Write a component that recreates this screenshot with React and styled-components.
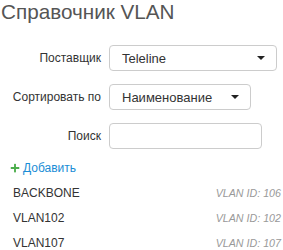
import React from "react";
import styled, { createGlobalStyle } from "styled-components";
import { FaPlus } from "react-icons/fa";

const GlobalStyle = createGlobalStyle`
    body {
        margin: 0;
        background: #fff;
        font-family: "Liberation Sans", Arial, sans-serif;
        color: #333;
    }
`;

const vlans = [
    { name: "BACKBONE", id: 106 },
    { name: "VLAN102", id: 102 },
    { name: "VLAN107", id: 107 },
];

const App = () => {
    return (
        <Wrapper>
            <GlobalStyle />
            <Title>Справочник VLAN</Title>

            <FormGrid>
                <Label>Поставщик</Label>
                <Select width="168px">
                    <span>Teleline</span>
                    <Caret />
                </Select>

                <Label>Сортировать по</Label>
                <Select width="142px">
                    <span>Наименование</span>
                    <Caret />
                </Select>

                <Label>Поиск</Label>
                <Input type="text" />
            </FormGrid>

            <AddLink href="#">
                <FaPlus />
                Добавить
            </AddLink>

            <List>
                {vlans.map((vlan) => (
                    <Row key={vlan.name}>
                        <span>{vlan.name}</span>
                        <VlanId>VLAN ID: {vlan.id}</VlanId>
                    </Row>
                ))}
            </List>
        </Wrapper>
    );
};

const Wrapper = styled.div`
    padding: 0 2px 0 1px;
`;

const Title = styled.h1`
    margin: 0 0 21px;
    font-size: 20.7px;
    line-height: 24px;
    font-weight: normal;
    color: #555;
`;

const FormGrid = styled.div`
    display: grid;
    grid-template-columns: 100px auto;
    column-gap: 8px;
    row-gap: 13px;
    align-items: center;
    justify-items: start;
`;

const Label = styled.label`
    justify-self: end;
    font-size: 12px;
    color: #333;
`;

const Select = styled.div`
    width: ${(p) => p.width};
    height: 26px;
    box-sizing: border-box;
    border: 1px solid #ccc;
    border-radius: 4px;
    padding: 0 11px 0 12px;
    display: flex;
    align-items: center;
    justify-content: space-between;
    font-size: 13px;
    color: #333;
`;

const Caret = styled.i`
    width: 0;
    height: 0;
    border-top: 4px solid #222;
    border-left: 4px solid transparent;
    border-right: 4px solid transparent;
`;

const Input = styled.input`
    width: 153px;
    height: 26px;
    box-sizing: border-box;
    border: 1px solid #ccc;
    border-radius: 4px;
    margin: 0;
    padding: 0 8px;
    font: inherit;
`;

const AddLink = styled.a`
    display: flex;
    align-items: center;
    gap: 3px;
    margin: 10px 0 0 9px;
    font-size: 12px;
    line-height: 18px;
    color: #1a8dd6;
    text-decoration: none;

    svg {
        font-size: 10px;
        color: #4cae4c;
    }
`;

const List = styled.div`
    margin-top: 3px;
    display: flex;
    flex-direction: column;
`;

const Row = styled.div`
    display: flex;
    justify-content: space-between;
    align-items: baseline;
    padding: 3.5px 0 3.5px 12px;
    font-size: 12px;
    line-height: 18px;
    color: #333;
`;

const VlanId = styled.span`
    font-size: 10.7px;
    font-style: italic;
    color: #999;
`;

export default App;
